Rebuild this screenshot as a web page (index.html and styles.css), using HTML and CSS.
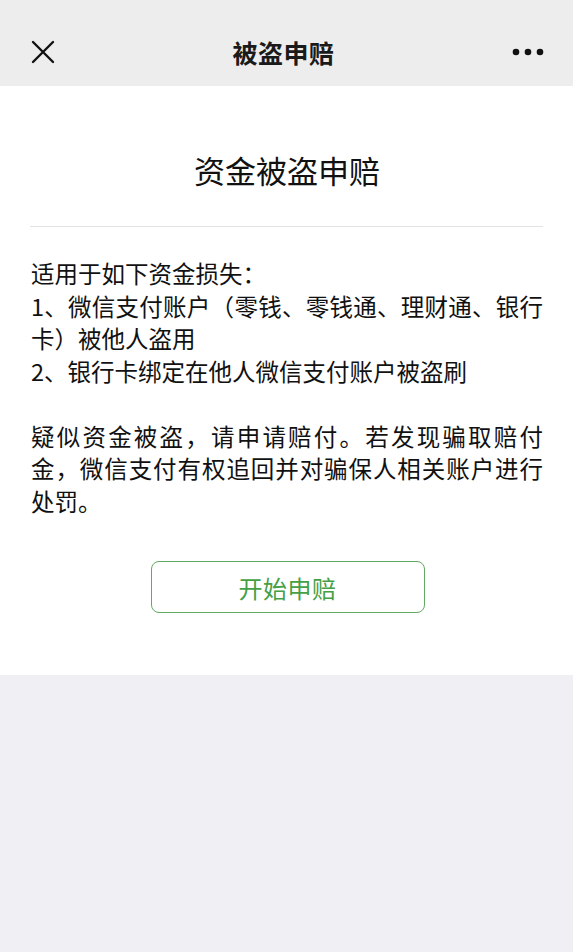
FILE: index.html
```html
<!DOCTYPE html>
<html lang="zh-CN">
<head>
<meta charset="utf-8">
<title>被盗申赔</title>
<link rel="stylesheet" href="styles.css">
</head>
<body>
<div class="page">
  <header class="navbar">
    <span class="nav-close">
      <svg width="24" height="24" viewBox="0 0 24 24"><path d="M2 2 L22 22 M22 2 L2 22" stroke="#111" stroke-width="2.4" stroke-linecap="round" fill="none"/></svg>
    </span>
    <span class="nav-title">被盗申赔</span>
    <span class="nav-more">
      <svg width="34" height="8" viewBox="0 0 34 8"><circle cx="4" cy="4" r="3.3" fill="#111"/><circle cx="16" cy="4" r="3.3" fill="#111"/><circle cx="28" cy="4" r="3.3" fill="#111"/></svg>
    </span>
  </header>
  <main class="card">
    <h1 class="card-title">资金被盗申赔</h1>
    <div class="divider"></div>
    <div class="body-text">
      <p class="para">适用于如下资金损失：<br>1、微信支付账户（零钱、零钱通、理财通、银行卡）被他人盗用<br>2、银行卡绑定在他人微信支付账户被盗刷</p>
      <p class="para">疑似资金被盗，请申请赔付。若发现骗取赔付金，微信支付有权追回并对骗保人相关账户进行处罚。</p>
    </div>
    <div class="actions">
      <button class="btn-start">开始申赔</button>
    </div>
  </main>
</div>
</body>
</html>
```

FILE: styles.css
```css
* { box-sizing: border-box; }
html, body {
  margin: 0;
  padding: 0;
  background: #efeff4;
  font-family: "Noto Sans CJK SC", "Noto Sans", sans-serif;
  color: #111;
}
.page {
  width: 573px;
  min-height: 952px;
  background: #efeff4;
}
.navbar {
  height: 86px;
  background: #ededed;
  display: flex;
  align-items: center;
  justify-content: space-between;
  padding: 17px 27px 0 31px;
}
.nav-close {
  display: flex;
  width: 24px;
  height: 24px;
}
.nav-title {
  font-size: 25px;
  font-weight: 700;
  color: #1a1a1a;
  letter-spacing: 0.5px;
}
.nav-more {
  display: flex;
  width: 34px;
  height: 8px;
}
.card {
  background: #fff;
  padding: 60px 30px 62px 31px;
}
.card-title {
  margin: 0;
  text-align: center;
  font-size: 31px;
  font-weight: 400;
  line-height: 48px;
  color: #111;
}
.divider {
  height: 1px;
  background: #e3e3e3;
  margin: 32px 0 0 -1px;
}
.body-text {
  padding-top: 30px;
  font-size: 23.5px;
  line-height: 32.5px;
  text-align: justify;
  color: #111;
}
.para {
  margin: 0;
}
.para + .para {
  margin-top: 32.5px;
}
.actions {
  display: flex;
  justify-content: center;
  padding-top: 44px;
}
.btn-start {
  width: 274px;
  height: 52px;
  border: 1.5px solid #62aa62;
  border-radius: 8px;
  background: #fff;
  color: #45a045;
  font-family: "Noto Sans CJK SC", "Noto Sans", sans-serif;
  font-size: 24px;
  letter-spacing: 0.5px;
  margin-left: 1px;
}
```
